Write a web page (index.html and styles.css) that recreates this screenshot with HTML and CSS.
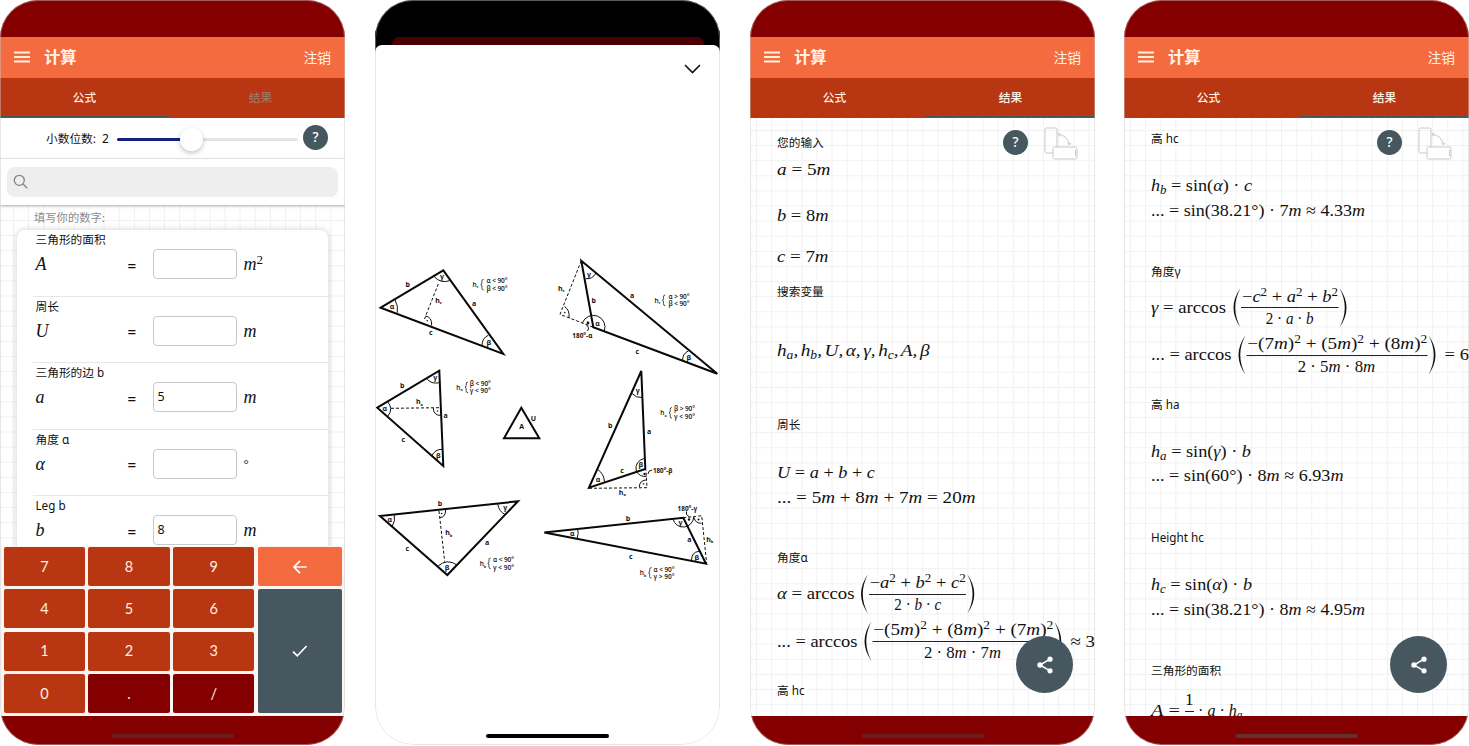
FILE: index.html
```html
<!DOCTYPE html>
<html lang="zh-CN">
<head>
<meta charset="utf-8">
<title>计算</title>
<link rel="stylesheet" href="styles.css">
</head>
<body>
<main class="gallery">

<section class="phone">
  <div class="status"></div>
  <header class="appbar">
    <svg class="menu" width="16" height="12" viewBox="0 0 16 12"><path d="M0 1.5h16M0 6h16M0 10.5h16"/></svg>
    <h1 class="title">计算</h1><span class="logout">注销</span>
  </header>
  <nav class="tabs"><span class="tab tab-on">公式</span><span class="tab tab-dim">结果</span></nav>
  <div class="decimals">
    <span class="dec-label">小数位数:</span><span class="dec-value">2</span>
    <span class="slider"><span class="slider-fill"></span><span class="knob"></span></span>
    <span class="help">?</span>
  </div>
  <div class="search">
    <div class="search-box"><svg width="16" height="16" viewBox="0 0 16 16"><circle cx="6.3" cy="6.3" r="5"/><path d="M10 10l4.2 4.2"/></svg></div>
  </div>
  <div class="form grid-paper form-paper">
    <p class="hint">填写你的数字:</p>
    <div class="card">
      <div class="field"><div class="label">三角形的面积</div><div class="entry"><i>A</i><b>=</b><span class="input"></span><i>m<sup>2</sup></i></div></div>
      <div class="field"><div class="label">周长</div><div class="entry"><i>U</i><b>=</b><span class="input"></span><i>m</i></div></div>
      <div class="field"><div class="label">三角形的边 b</div><div class="entry"><i>a</i><b>=</b><span class="input">5</span><i>m</i></div></div>
      <div class="field"><div class="label">角度 ɑ</div><div class="entry"><i>α</i><b>=</b><span class="input"></span><span class="degree">°</span></div></div>
      <div class="field"><div class="label">Leg b</div><div class="entry"><i>b</i><b>=</b><span class="input">8</span><i>m</i></div></div>
    </div>
  </div>
  <div class="keypad">
    <span class="key">7</span><span class="key">8</span><span class="key">9</span>
    <span class="key key-back"><svg width="14" height="14" viewBox="0 0 14 14"><path d="M7 .8L.9 7 7 13.2M1 7h12.6"/></svg></span>
    <span class="key">4</span><span class="key">5</span><span class="key">6</span>
    <span class="key key-ok"><svg width="16" height="12" viewBox="0 0 16 12"><path d="M1 6.6l4.3 4.2L14.6 1"/></svg></span>
    <span class="key">1</span><span class="key">2</span><span class="key">3</span>
    <span class="key">0</span><span class="key key-dark">.</span><span class="key key-dark">/</span>
  </div>
  <footer class="bottom"><span class="home"></span></footer>
</section>

<section class="phone phone-sheet">
  <div class="sheet-top"><div class="behind"></div></div>
  <div class="sheet">
    <div class="sheet-bar"><svg width="17" height="10" viewBox="0 0 17 10"><path d="M1 1l7.5 7.5L16 1"/></svg></div>
    <svg class="diagram" width="345" height="340" viewBox="375 250 345 340">
      <!-- acute triangle, height on c -->
      <g>
        <path class="side" d="M380.7 307.7L443.3 270.3 503.3 354z"/>
        <path class="dash" d="M438.3 284L424.5 319"/>
        <path class="arc" d="M395 299.8Q398.5 306 397.3 312.7M434.3 276.7Q441 284 450 280.5M488.3 335.3Q482 338 482 345.8M425.5 316Q432 317 431.7 325.5"/>
        <circle cx="427.3" cy="320.7" r=".8"/>
        <text x="407.7" y="284.7">b</text><text x="474" y="303.7">a</text><text x="430.7" y="332.3">c</text>
        <text x="392" y="306.5">α</text><text x="442" y="276.5">γ</text><text x="488.7" y="342">β</text>
        <text x="438.5" y="300">h<tspan class="sub" dy="2">c</tspan></text>
        <text class="thin" x="475.5" y="284.3">h<tspan class="sub" dy="2">c</tspan></text>
        <path class="brace" d="M483.7 279.3q-2 0-1.8 2v1.6q0 1.7-1.2 1.7q1.2 0 1.2 1.7v1.7q-.2 2 1.8 2"/>
        <text class="thin" x="497" y="280.5" textLength="21">α &lt; 90°</text><text class="thin" x="497" y="288" textLength="21">β &lt; 90°</text>
      </g>
      <!-- obtuse at α -->
      <g>
        <path class="side" d="M581.3 260.7L593.3 327.3 717.3 373.8z"/>
        <path class="dash" d="M581.3 260.7L560 314.3 593.3 327.3"/>
        <path class="arc" d="M585.7 278.7Q592.5 279.5 596 273M582.4 323A11.3 11.3 0 0 1 604.3 331M688.3 351Q682 354 682.7 361M564.5 306.5Q570 310 569 318M586 324.5Q590 327 587.5 331"/>
        <circle cx="564.7" cy="312.5" r=".8"/><circle cx="588" cy="323" r="1.4"/>
        <text x="561.3" y="288.3">h<tspan class="sub" dy="2">c</tspan></text><text x="593.7" y="300">b</text><text x="632" y="295.7">a</text><text x="637.3" y="351">c</text>
        <text x="589" y="274">γ</text><text x="597.5" y="323">α</text><text x="688.9" y="357">β</text><text x="582.3" y="335.3" textLength="20" lengthAdjust="spacingAndGlyphs">180°-α</text>
        <text class="thin" x="657.5" y="300.3">h<tspan class="sub" dy="2">c</tspan></text>
        <path class="brace" d="M665.3 295q-2 0-1.8 2v1.6q0 1.7-1.2 1.7q1.2 0 1.2 1.7v1.7q-.2 2 1.8 2"/>
        <text class="thin" x="679" y="296" textLength="21">α &gt; 90°</text><text class="thin" x="679" y="303" textLength="21">β &lt; 90°</text>
      </g>
      <!-- acute triangle, height on a -->
      <g>
        <path class="side" d="M377.3 407.7L439.3 370.7 443.3 466z"/>
        <path class="dash" d="M391 408.3L440.5 407.7"/>
        <path class="arc" d="M387.3 401.5Q394 408.5 387.7 416.5M426.7 378.5Q431 384.5 439.7 382.7M431.7 456Q435 449 442.3 449.3M433.3 408Q433.5 415.5 441 415.5"/>
        <circle cx="437.5" cy="411" r=".8"/>
        <text x="402.3" y="385.3">b</text><text x="419.5" y="401.5">h<tspan class="sub" dy="2">a</tspan></text><text x="445.7" y="415">a</text><text x="403.3" y="439.7">c</text>
        <text x="384.7" y="408">α</text><text x="435.3" y="377.7">γ</text><text x="438.3" y="455.5">β</text>
        <text class="thin" x="459.5" y="387">h<tspan class="sub" dy="2">a</tspan></text>
        <path class="brace" d="M468 382q-2 0-1.8 2v1.6q0 1.7-1.2 1.7q1.2 0 1.2 1.7v1.7q-.2 2 1.8 2"/>
        <text class="thin" x="480.3" y="383.5" textLength="21">β &lt; 90°</text><text class="thin" x="480.3" y="390.7" textLength="21">γ &lt; 90°</text>
      </g>
      <!-- area and perimeter -->
      <g>
        <path class="side" d="M521.3 407.7L504 438.3H539.3z"/>
        <text x="521.7" y="426.5">A</text><text x="533.5" y="418.3">U</text>
      </g>
      <!-- obtuse at β -->
      <g>
        <path class="side" d="M641.3 371L589 487.7 645.3 469z"/>
        <path class="dash" d="M589 488.3L647 487.7 646 470"/>
        <path class="arc" d="M631.7 393.3Q636 398 642 397.5M597.7 469.5Q604 473.5 604.5 482M645.3 458Q634 461 636.3 471.5Q640 477 646.5 476.5M639.3 487Q639.5 480.5 646 480M648 474Q648 470.5 652 470"/>
        <circle cx="643.5" cy="484" r=".8"/><circle cx="644.5" cy="474" r="1.2"/>
        <text x="637.7" y="390">γ</text><text x="610.3" y="425.3">b</text><text x="649" y="431.3">a</text><text x="640.7" y="464.5">β</text>
        <text x="622" y="470.5">c</text><text x="598" y="479">α</text><text x="622.3" y="492.3">h<tspan class="sub" dy="2">a</tspan></text><text x="662.7" y="470" textLength="19.5" lengthAdjust="spacingAndGlyphs">180°-β</text>
        <text class="thin" x="663.5" y="412.5">h<tspan class="sub" dy="2">a</tspan></text>
        <path class="brace" d="M672 407.5q-2 0-1.8 2v1.6q0 1.7-1.2 1.7q1.2 0 1.2 1.7v1.7q-.2 2 1.8 2"/>
        <text class="thin" x="684.5" y="408.3" textLength="21">β &gt; 90°</text><text class="thin" x="684.5" y="416" textLength="21">γ &lt; 90°</text>
      </g>
      <!-- acute triangle, height on b -->
      <g>
        <path class="side" d="M380 516L518 501.3 447.3 575z"/>
        <path class="dash" d="M439 511L444.7 561.7"/>
        <path class="arc" d="M394.3 515Q395.5 521 392.3 526M497.7 504Q499 511.5 505 514.5M437.7 566.3Q447 558 457 565M439.7 517.5Q445.5 517.5 445.7 510"/>
        <circle cx="441.7" cy="513.5" r=".8"/>
        <text x="440" y="503.5">b</text><text x="487" y="542.7">a</text><text x="407.3" y="548">c</text>
        <text x="389.7" y="519.5">α</text><text x="505.3" y="507">γ</text><text x="447" y="567">β</text><text x="448.7" y="532.5">h<tspan class="sub" dy="2">b</tspan></text>
        <text class="thin" x="483" y="563.5">h<tspan class="sub" dy="2">b</tspan></text>
        <path class="brace" d="M490.7 558q-2 0-1.8 2v1.6q0 1.7-1.2 1.7q1.2 0 1.2 1.7v1.7q-.2 2 1.8 2"/>
        <text class="thin" x="503.5" y="559.5" textLength="21">α &lt; 90°</text><text class="thin" x="503.5" y="567" textLength="21">γ &lt; 90°</text>
      </g>
      <!-- obtuse at γ -->
      <g>
        <path class="side" d="M544.3 532.5L683.3 517.7 706 563.7z"/>
        <path class="dash" d="M683.3 517.7L701.7 515.7 706.7 563.7"/>
        <path class="arc" d="M577.7 529.3Q579 533.5 577 538.5M673 519A10.5 10.5 0 0 0 693.7 517M691.5 560.5Q691.5 552 699 551.3M694 517.5Q695.5 523.5 701.5 523.3M686.5 511.5v3l3 2.5"/>
        <circle cx="698.5" cy="519.5" r="1"/><circle cx="689" cy="519.5" r="1.2"/>
        <text x="628" y="518.3">b</text><text x="630.7" y="556.5">c</text><text x="572.3" y="533.5">α</text><text x="680.5" y="522.5">γ</text>
        <text x="689.3" y="539.7">a</text><text x="696.7" y="557">β</text><text x="709.7" y="539.3">h<tspan class="sub" dy="2">b</tspan></text><text x="687.3" y="508" textLength="19.5" lengthAdjust="spacingAndGlyphs">180°-γ</text>
        <text class="thin" x="643" y="572.5">h<tspan class="sub" dy="2">b</tspan></text>
        <path class="brace" d="M651.5 567.5q-2 0-1.8 2v1.6q0 1.7-1.2 1.7q1.2 0 1.2 1.7v1.7q-.2 2 1.8 2"/>
        <text class="thin" x="664" y="569" textLength="21">α &lt; 90°</text><text class="thin" x="664" y="576" textLength="21">γ &gt; 90°</text>
      </g>
    </svg>
    <span class="home home-black"></span>
  </div>
</section>

<section class="phone">
  <div class="status"></div>
  <header class="appbar">
    <svg class="menu" width="16" height="12" viewBox="0 0 16 12"><path d="M0 1.5h16M0 6h16M0 10.5h16"/></svg>
    <h1 class="title">计算</h1><span class="logout">注销</span>
  </header>
  <nav class="tabs"><span class="tab">公式</span><span class="tab tab-on">结果</span></nav>
  <div class="result grid-paper">
    <div class="tools"><span class="help">?</span>
      <svg class="rotate" width="34" height="33" viewBox="0 0 34 33"><rect x="1" y="1" width="12" height="25" rx="1.5"/><path d="M14.5 7.5Q23 8 25.5 17.5M16 5.8l-2 1.6 2 1.7M23.8 16l1.8 2 1.4-2.2"/><rect x="9" y="20" width="24" height="12" rx="1.5" fill="#fff"/><path d="M31.5 23v6"/></svg>
    </div>
    <div class="label">您的输入</div>
    <svg class="math" width="319" height="129" viewBox="777 153 319 129">
      <text x="777" y="174.7" textLength="53.5" lengthAdjust="spacingAndGlyphs"><tspan class="v">a</tspan> = 5<tspan class="v">m</tspan></text>
      <text x="777" y="220.7" textLength="51.5" lengthAdjust="spacingAndGlyphs"><tspan class="v">b</tspan> = 8<tspan class="v">m</tspan></text>
      <text x="777" y="262.3" textLength="51.5" lengthAdjust="spacingAndGlyphs"><tspan class="v">c</tspan> = 7<tspan class="v">m</tspan></text>
    </svg>
    <div class="label">搜索变量</div>
    <svg class="math" width="319" height="113" viewBox="777 302 319 113">
      <text class="v tight" x="777" y="356" textLength="152.500" lengthAdjust="spacingAndGlyphs">h<tspan class="s" dy="3">a</tspan><tspan dy="-3">, h</tspan><tspan class="s" dy="3">b</tspan><tspan dy="-3">, U, α, γ, h</tspan><tspan class="s" dy="3">c</tspan><tspan dy="-3">, A, β</tspan></text>
    </svg>
    <div class="label">周长</div>
    <svg class="math" width="319" height="113" viewBox="777 435 319 113">
      <text x="777" y="478" textLength="98" lengthAdjust="spacingAndGlyphs"><tspan class="v">U</tspan> = <tspan class="v">a</tspan> + <tspan class="v">b</tspan> + <tspan class="v">c</tspan></text>
      <text x="777" y="502.7" textLength="198.5" lengthAdjust="spacingAndGlyphs">... = 5<tspan class="v">m</tspan> + 8<tspan class="v">m</tspan> + 7<tspan class="v">m</tspan> = 20<tspan class="v">m</tspan></text>
    </svg>
    <div class="label">角度ɑ</div>
    <svg class="math" width="319" height="113" viewBox="777 568 319 113">
      <text x="777" y="599" textLength="77.5" lengthAdjust="spacingAndGlyphs"><tspan class="v">α</tspan> = arccos</text>
      <path class="paren" d="M868 574.3Q854 594 868 613.7Q857.5 594 868 574.3zM967.3 574.3Q981.3 594 967.3 613.7Q977.8 594 967.3 574.3z"/>
      <text x="869.7" y="588.3" textLength="96" lengthAdjust="spacingAndGlyphs">−<tspan class="v">a</tspan><tspan class="s" dy="-6">2</tspan><tspan dy="6"> + </tspan><tspan class="v">b</tspan><tspan class="s" dy="-6">2</tspan><tspan dy="6"> + </tspan><tspan class="v">c</tspan><tspan class="s" dy="-6">2</tspan></text>
      <path class="bar" d="M869 594.5H966"/>
      <text x="894.3" y="610.3" textLength="47" lengthAdjust="spacingAndGlyphs">2 · <tspan class="v">b</tspan> · <tspan class="v">c</tspan></text>
      <text x="777" y="646.5" textLength="80.5" lengthAdjust="spacingAndGlyphs">... = arccos</text>
      <path class="paren" d="M871.5 621.5Q857.5 641.2 871.5 660.9Q861 641.2 871.5 621.5zM1054.3 621.5Q1068.3 641.2 1054.3 660.9Q1064.8 641.2 1054.3 621.5z"/>
      <text x="873.3" y="635.3" textLength="180" lengthAdjust="spacingAndGlyphs">−(5<tspan class="v">m</tspan>)<tspan class="s" dy="-6">2</tspan><tspan dy="6"> + (8</tspan><tspan class="v">m</tspan>)<tspan class="s" dy="-6">2</tspan><tspan dy="6"> + (7</tspan><tspan class="v">m</tspan>)<tspan class="s" dy="-6">2</tspan></text>
      <path class="bar" d="M872.5 641.5H1053.5"/>
      <text x="924" y="657.5" textLength="77" lengthAdjust="spacingAndGlyphs">2 · 8<tspan class="v">m</tspan> · 7<tspan class="v">m</tspan></text>
      <text x="1070.5" y="646.5" textLength="24.5" lengthAdjust="spacingAndGlyphs">≈ 3</text>
    </svg>
    <div class="label">高 hc</div>
    <span class="fab"><svg width="18" height="18" viewBox="0 0 18 18"><path d="M14 3.2L4 9l10 5.8"/><circle cx="14" cy="3.2" r="2.6"/><circle cx="4" cy="9" r="2.7"/><circle cx="14" cy="14.8" r="2.6"/></svg></span>
  </div>
  <footer class="bottom"><span class="home"></span></footer>
</section>

<section class="phone">
  <div class="status"></div>
  <header class="appbar">
    <svg class="menu" width="16" height="12" viewBox="0 0 16 12"><path d="M0 1.5h16M0 6h16M0 10.5h16"/></svg>
    <h1 class="title">计算</h1><span class="logout">注销</span>
  </header>
  <nav class="tabs"><span class="tab">公式</span><span class="tab tab-on">结果</span></nav>
  <div class="result result-scrolled grid-paper">
    <div class="tools"><span class="help">?</span>
      <svg class="rotate" width="34" height="33" viewBox="0 0 34 33"><rect x="1" y="1" width="12" height="25" rx="1.5"/><path d="M14.5 7.5Q23 8 25.5 17.5M16 5.8l-2 1.6 2 1.7M23.8 16l1.8 2 1.4-2.2"/><rect x="9" y="20" width="24" height="12" rx="1.5" fill="#fff"/><path d="M31.5 23v6"/></svg>
    </div>
    <div class="label">高 hc</div>
    <svg class="math" width="319" height="113" viewBox="1151 149 319 113">
      <text x="1151" y="190.5" textLength="101" lengthAdjust="spacingAndGlyphs"><tspan class="v">h</tspan><tspan class="s v" dy="3">b</tspan><tspan dy="-3"> = sin(</tspan><tspan class="v">α</tspan>) · <tspan class="v">c</tspan></text>
      <text x="1151" y="215.5" textLength="214" lengthAdjust="spacingAndGlyphs">... = sin(38.21°) · 7<tspan class="v">m</tspan> ≈ 4.33<tspan class="v">m</tspan></text>
    </svg>
    <div class="label">角度γ</div>
    <svg class="math" width="319" height="113" viewBox="1151 282 319 113">
      <text x="1151" y="312.7" textLength="75" lengthAdjust="spacingAndGlyphs"><tspan class="v">γ</tspan> = arccos</text>
      <path class="paren" d="M1240.5 288Q1226.5 307.7 1240.5 327.4Q1230 307.7 1240.5 288zM1339.5 288Q1353.5 307.7 1339.5 327.4Q1350 307.7 1339.5 288z"/>
      <text x="1242" y="302" textLength="96" lengthAdjust="spacingAndGlyphs">−<tspan class="v">c</tspan><tspan class="s" dy="-6">2</tspan><tspan dy="6"> + </tspan><tspan class="v">a</tspan><tspan class="s" dy="-6">2</tspan><tspan dy="6"> + </tspan><tspan class="v">b</tspan><tspan class="s" dy="-6">2</tspan></text>
      <path class="bar" d="M1241 307.5H1338.5"/>
      <text x="1265.7" y="324" textLength="48" lengthAdjust="spacingAndGlyphs">2 · <tspan class="v">a</tspan> · <tspan class="v">b</tspan></text>
      <text x="1151" y="360" textLength="80.5" lengthAdjust="spacingAndGlyphs">... = arccos</text>
      <path class="paren" d="M1245.5 335.2Q1231.5 354.9 1245.5 374.6Q1235 354.9 1245.5 335.2zM1428.5 335.2Q1442.5 354.9 1428.5 374.6Q1439 354.9 1428.5 335.2z"/>
      <text x="1247.3" y="349" textLength="180" lengthAdjust="spacingAndGlyphs">−(7<tspan class="v">m</tspan>)<tspan class="s" dy="-6">2</tspan><tspan dy="6"> + (5</tspan><tspan class="v">m</tspan>)<tspan class="s" dy="-6">2</tspan><tspan dy="6"> + (8</tspan><tspan class="v">m</tspan>)<tspan class="s" dy="-6">2</tspan></text>
      <path class="bar" d="M1246.5 355.5H1427.5"/>
      <text x="1297.7" y="371.5" textLength="77.5" lengthAdjust="spacingAndGlyphs">2 · 5<tspan class="v">m</tspan> · 8<tspan class="v">m</tspan></text>
      <text x="1444.5" y="360" textLength="24.5" lengthAdjust="spacingAndGlyphs">= 6</text>
    </svg>
    <div class="label">高 ha</div>
    <svg class="math" width="319" height="113" viewBox="1151 415 319 113">
      <text x="1151" y="456.5" textLength="100" lengthAdjust="spacingAndGlyphs"><tspan class="v">h</tspan><tspan class="s v" dy="3">a</tspan><tspan dy="-3"> = sin(</tspan><tspan class="v">γ</tspan>) · <tspan class="v">b</tspan></text>
      <text x="1151" y="481.3" textLength="192.5" lengthAdjust="spacingAndGlyphs">... = sin(60°) · 8<tspan class="v">m</tspan> ≈ 6.93<tspan class="v">m</tspan></text>
    </svg>
    <div class="label">Height hc</div>
    <svg class="math" width="319" height="113" viewBox="1151 548 319 113">
      <text x="1151" y="589.5" textLength="101" lengthAdjust="spacingAndGlyphs"><tspan class="v">h</tspan><tspan class="s v" dy="3">c</tspan><tspan dy="-3"> = sin(</tspan><tspan class="v">α</tspan>) · <tspan class="v">b</tspan></text>
      <text x="1151" y="614.5" textLength="214" lengthAdjust="spacingAndGlyphs">... = sin(38.21°) · 8<tspan class="v">m</tspan> ≈ 4.95<tspan class="v">m</tspan></text>
    </svg>
    <div class="label">三角形的面积</div>
    <svg class="math" width="319" height="60" viewBox="1151 681 319 60">
      <text x="1151" y="715.5" textLength="29" lengthAdjust="spacingAndGlyphs"><tspan class="v">A</tspan> =</text>
      <text x="1185" y="705">1</text><path class="bar" d="M1185 711.5H1194"/><text x="1185" y="727">2</text>
      <text x="1198" y="715.5" textLength="44.5" lengthAdjust="spacingAndGlyphs">· <tspan class="v">a</tspan> · <tspan class="v">h</tspan><tspan class="s v" dy="3">a</tspan></text>
    </svg>
    <span class="fab"><svg width="18" height="18" viewBox="0 0 18 18"><path d="M14 3.2L4 9l10 5.8"/><circle cx="14" cy="3.2" r="2.6"/><circle cx="4" cy="9" r="2.7"/><circle cx="14" cy="14.8" r="2.6"/></svg></span>
  </div>
  <footer class="bottom"><span class="home home-light"></span></footer>
</section>
</main>
</body>
</html>
```
FILE: styles.css
```css
* { box-sizing: border-box; }
body {
  margin: 0;
  background: #fff;
  color: #111;
  font: 11.7px/20px "Noto Sans", "Noto Sans CJK SC", sans-serif;
  overflow: hidden;
}
.gallery { display: grid; grid-template-columns: 375px 375px 374px 345px; }
.phone {
  position: relative;
  display: flex;
  flex-direction: column;
  width: 345px;
  height: 745px;
  border-radius: 38px;
  overflow: hidden;
  background: #fff;
}
.phone::after {
  content: "";
  position: absolute;
  z-index: 2;
  inset: 0;
  border: 1px solid rgba(200, 200, 200, .45);
  border-radius: 38px;
  pointer-events: none;
}
.status { height: 37px; background: #840000; flex: none; }
.appbar {
  display: flex;
  align-items: center;
  height: 41px;
  flex: none;
  padding: 0 14px 2px 14px;
  background: #f56b40;
  color: #fff4e6;
  font-family: "Noto Sans CJK SC", sans-serif;
}
.menu { stroke: #fff0dc; stroke-width: 1.8; fill: none; }
.title { flex: 1; margin: -2px 0 0 14px; font-size: 16.3px; font-weight: 700; }
.logout { font-size: 13.8px; }
.tabs {
  display: flex;
  justify-content: space-between;
  height: 40px;
  flex: none;
  background: #b93613;
  color: #fff4e6;
  font-family: "Noto Sans CJK SC", sans-serif;
}
.tab { width: 169px; height: 40px; line-height: 38px; text-align: center; font-weight: 500; }
.tab-on { border-bottom: 2px solid #4c5759; }
.tab-dim { color: #a5735d; }

.decimals {
  display: flex;
  align-items: center;
  height: 41px;
  flex: none;
  padding: 0 16px 0 46px;
  border-bottom: 1px solid #ececec;
  background: #fff;
}
.dec-label { width: 56px; white-space: nowrap; font-family: "Noto Sans CJK SC", sans-serif; }
.dec-value { width: 15px; font-size: 12px; margin-top: 2px; }
.slider { position: relative; width: 181px; height: 3px; border-radius: 2px; background: #e4e4e4; margin-top: 3px; }
.slider-fill { display: block; width: 66px; height: 3px; border-radius: 2px; background: #14217c; }
.knob {
  position: absolute;
  left: 63px;
  top: -10px;
  width: 23px;
  height: 23px;
  border-radius: 50%;
  background: #fff;
  box-shadow: 0 2px 5px rgba(0, 0, 0, .24);
}
.help {
  display: block;
  width: 25px;
  height: 25px;
  border-radius: 50%;
  background: #46575f;
  color: #fff;
  font: 500 13.5px/24px "Noto Sans", sans-serif;
  text-align: center;
}
.decimals .help { margin: -1px 0 0 5px; }
.search {
  position: relative;
  z-index: 1;
  height: 46px;
  flex: none;
  padding: 8px 7px 0;
  background: #fff;
  box-shadow: 0 1px 3px rgba(0, 0, 0, .3);
}
.search-box { height: 30px; padding: 7px 6px; border-radius: 8px; background: #eee; }
.search-box svg { display: block; fill: none; stroke: #848484; stroke-width: 1.3; }

.grid-paper {
  background-color: #fff;
  background-image:
    linear-gradient(90deg, #f1f1f1 1px, transparent 1px),
    linear-gradient(#f1f1f1 1px, transparent 1px);
  background-size: 15.12px 15.12px;
  background-position: 6px 12px;
}
.form-paper { background-position: 13px 15px; }
.form { height: 341px; flex: none; overflow: hidden; padding-left: 17px; }
.hint { margin: 2px 0 0 17px; height: 23px; color: #8c8c8c; font-size: 11.3px; font-family: "Noto Sans CJK SC", sans-serif; }
.card {
  width: 311px;
  height: 340px;
  padding-left: 16px;
  border-radius: 8px;
  background: #fff;
  box-shadow: 0 0 6px rgba(0, 0, 0, .2);
}
.field { height: 66.5px; border-bottom: 1px solid #e7e7e7; padding-left: 2.5px; }
.field .label { height: 19px; line-height: 18px; }
.label { height: 20px; line-height: 18px; font-family: "Noto Sans", "Noto Sans CJK SC", sans-serif; white-space: nowrap; }
.entry {
  display: grid;
  grid-template-columns: 92px 25px 91px 60px;
  align-items: center;
  height: 30px;
}
.entry i { font: italic 18px/20px "Liberation Serif", serif; }
.entry sup { font-size: 13px; line-height: 0; font-style: normal; vertical-align: 6px; }
.entry b { font: 600 15px/20px "Noto Sans", sans-serif; padding-top: 1px; }
.degree { font: 13px/20px "Liberation Serif", serif; }
.input {
  width: 84px;
  height: 30px;
  border: 1px solid #c8c8c8;
  border-radius: 4px;
  padding-left: 4px;
  line-height: 28px;
  font-size: 12.5px;
}
.keypad {
  display: grid;
  grid-template-columns: 81.5px 81.5px 81.5px 84px;
  grid-template-rows: repeat(4, 39px);
  gap: 3.4px 3.2px;
  height: 170px;
  flex: none;
  padding: 1px 3px 0 3.6px;
  background: #fdf5f2;
}
.key {
  display: flex;
  align-items: center;
  justify-content: center;
  border-radius: 2px;
  background: #b93613;
  color: #fff0e0;
  font: 14.5px/20px Lato, sans-serif;
}
.key svg { fill: none; stroke: #fff; stroke-width: 1.7; }
.key-dark { background: #840000; }
.key-back { background: #f56b40; }
.key-ok { background: #46575f; grid-column: 4; grid-row: 2 / 5; }
.bottom { height: 29px; flex: none; background: #840000; padding-top: 18px; }
.home { display: block; width: 123px; height: 4px; margin: 0 auto; border-radius: 2px; background: #65201f; }
.home-light { background: #5e3030; }

.result { position: relative; height: 598px; flex: none; overflow: hidden; padding: 15px 0 0 27px; }
.result-scrolled { padding-top: 11px; }
.tools { position: absolute; left: 253px; top: 9px; display: flex; gap: 16px; }
.tools .help { margin-top: 3px; }
.rotate { fill: none; stroke: #c8c8c8; stroke-width: 1; }
.math {
  display: block;
  overflow: visible;
  font: 17px "Liberation Serif", serif;
  fill: #111;
}
.math .v { font-style: italic; }
.math .s { font-size: 12px; }
.math .tight { word-spacing: -2px; }
.bar { stroke: #222; stroke-width: 1; }
.fab {
  position: absolute;
  left: 266px;
  top: 518px;
  display: grid;
  place-items: center;
  width: 57px;
  height: 57px;
  border-radius: 50%;
  background: #46575f;
}
.fab svg { fill: #fff; }
.fab path { fill: none; stroke: #fff; stroke-width: 1.5; }

.sheet-top { height: 45px; flex: none; padding: 37px 16px 0 17px; background: #000; box-shadow: 0 9px #000; }
.behind { height: 16px; border-radius: 7px 7px 0 0; background: #4a0003; }
.sheet { position: relative; height: 700px; border-radius: 7px 7px 0 0; background: #fff; }
.sheet-bar { display: flex; justify-content: flex-end; height: 205px; padding: 19px 19px 0 0; }
.sheet-bar svg { fill: none; stroke: #111; stroke-width: 1.6; }
.diagram { display: block; height: 340px; font: 700 7px "Open Sans", sans-serif; fill: #111; }
.diagram text { text-anchor: middle; dominant-baseline: central; }
.diagram .sub { font-size: 4px; }
.diagram .thin { font-weight: 600; font-size: 6.5px; }
.side { fill: none; stroke: #080808; stroke-width: 2; }
.dash { fill: none; stroke: #111; stroke-width: 1; stroke-dasharray: 3 2; }
.arc { fill: none; stroke: #111; stroke-width: 1; }
.brace { fill: none; stroke: #222; stroke-width: .8; }
.home-black { margin-top: 144px; margin-left: 111px; background: #000; }
```
